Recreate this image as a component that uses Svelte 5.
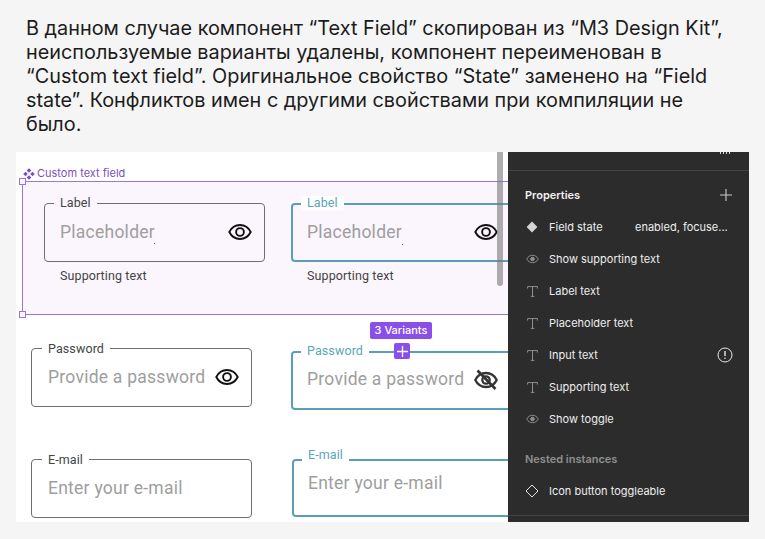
<script>
  const fields = [
    { id: 'a', label: 'Label', ph: 'Placeholder', help: 'Supporting text', eye: 'on', dot: true },
    { id: 'b', label: 'Label', ph: 'Placeholder', help: 'Supporting text', eye: 'on', dot: true, focus: true },
    { id: 'c', label: 'Password', ph: 'Provide a password', eye: 'on' },
    { id: 'd', label: 'Password', ph: 'Provide a password', eye: 'off', focus: true },
    { id: 'e', label: 'E-mail', ph: 'Enter your e-mail' },
    { id: 'f', label: 'E-mail', ph: 'Enter your e-mail', focus: true }
  ];
  const props = [
    { icon: 'diamond', name: 'Field state', value: 'enabled, focuse...' },
    { icon: 'eye', name: 'Show supporting text' },
    { icon: 'text', name: 'Label text' },
    { icon: 'text', name: 'Placeholder text' },
    { icon: 'text', name: 'Input text', warn: true },
    { icon: 'text', name: 'Supporting text' },
    { icon: 'eye', name: 'Show toggle' }
  ];
</script>

<main class="page">
  <p class="intro">В данном случае компонент “Text Field” скопирован из “M3 Design Kit”, неиспользуемые варианты удалены, компонент переименован в “Custom text field”. Оригинальное свойство “State” заменено на “Field state”. Конфликтов имен с другими свойствами при компиляции не было.</p>

  <section class="stage">
    <div class="canvas">
      <div class="selection"></div>
      <span class="handle h1"></span>
      <span class="handle h2"></span>
      <div class="comp-name">
        <svg width="12" height="12" viewBox="0 0 12 12" fill="#7b4fc0"><path d="M6 .2 8.300 2.500 6 4.800 3.700 2.500ZM2.500 3.700 4.800 6 2.500 8.300 .2 6ZM9.500 3.700 11.800 6 9.500 8.300 7.200 6ZM6 7.200 8.300 9.500 6 11.800 3.700 9.500Z"/></svg>
        <span>Custom text field</span>
      </div>

      {#each fields as f}
        <div class="field {f.id}" class:focus={f.focus}>
          <span class="label">{f.label}</span>
          <span class="ph">{f.ph}</span>
          {#if f.dot}<span class="dot"></span>{/if}
          {#if f.eye === 'on'}
            <svg class="eye" width="24" height="24" viewBox="0 0 24 24" fill="none" stroke="#111" stroke-width="1.900"><path d="M1.300 12C3.500 7.600 7.400 5 12 5s8.500 2.600 10.700 7c-2.200 4.400-6.100 7-10.700 7S3.500 16.400 1.300 12Z"/><circle cx="12" cy="12" r="3.900"/></svg>
          {:else if f.eye === 'off'}
            <svg class="eye" width="24" height="24" viewBox="0 0 24 24" fill="none" stroke="#333" stroke-width="2.300"><path d="M1.300 12C3.500 7.600 7.400 5 12 5s8.500 2.600 10.700 7c-2.200 4.400-6.100 7-10.700 7S3.500 16.400 1.300 12Z"/><circle cx="12" cy="12" r="3.700"/><path d="M3.500 2.500 21.500 21" stroke-width="2.600"/></svg>
          {/if}
          {#if f.help}<span class="help">{f.help}</span>{/if}
        </div>
      {/each}

      <div class="scrollbar"></div>
      <div class="variants">3 Variants</div>
      <div class="add">
        <svg width="11" height="11" viewBox="0 0 11 11" stroke="#fff" stroke-width="1.300"><path d="M5.500 0v11M0 5.500h11"/></svg>
      </div>
    </div>

    <aside class="panel">
      <div class="panel-top">
        <svg width="12" height="2" viewBox="0 0 12 2" fill="none" stroke="#ddd"><path d="M1.500 0v2M4.500 0v2M7.500 0v2M10.500 0v2"/></svg>
      </div>
      <div class="panel-body">
        <header class="panel-head">
          <h2>Properties</h2>
          <svg width="12" height="12" viewBox="0 0 12 12" stroke="#c9c9c9" stroke-width="1.100"><path d="M6 0v12M0 6h12"/></svg>
        </header>
        {#each props as p}
          <div class="row">
            <span class="ico">
              {#if p.icon === 'diamond'}
                <svg width="12" height="12" viewBox="0 0 12 12" fill="#d4d4d4"><path d="M6 .6 11.400 6 6 11.400 .6 6Z"/></svg>
              {:else if p.icon === 'eye'}
                <svg width="13" height="10" viewBox="0 0 13 10" fill="none" stroke="#8e8e8e"><path d="M.7 5C2 2.600 4 1.300 6.500 1.300S11 2.600 12.300 5C11 7.400 9 8.700 6.500 8.700S2 7.400 .7 5Z"/><circle cx="6.500" cy="5" r="1.800" fill="#8e8e8e"/></svg>
              {:else}
                <svg width="11" height="11" viewBox="0 0 11 11" fill="none" stroke="#8e8e8e" stroke-width="1"><path d="M.6 2.500V.6h9.800v1.900M5.500 .6v9.800M3.700 10.400h3.600"/></svg>
              {/if}
            </span>
            <span class="name">{p.name}</span>
            {#if p.value}<span class="value">{p.value}</span>{/if}
            {#if p.warn}
              <svg class="warn" width="16" height="16" viewBox="0 0 16 16" fill="none" stroke="#e8e8e8"><circle cx="8" cy="8" r="7"/><path d="M8 4v5" stroke-width="1.400"/><circle cx="8" cy="11.300" r=".8" fill="#e8e8e8" stroke="none"/></svg>
            {/if}
          </div>
        {/each}
        <h3>Nested instances</h3>
        <div class="row">
          <span class="ico">
            <svg width="14" height="14" viewBox="0 0 14 14" fill="none" stroke="#e6e6e6"><path d="M7 1 13 7 7 13 1 7Z"/></svg>
          </span>
          <span class="name">Icon button toggleable</span>
        </div>
      </div>
      <div class="panel-foot"></div>
    </aside>
  </section>
</main>

<style>
  :global(body) { margin: 0; background: #f5f5f5; }
  .page {
    width: 765px;
    height: 539px;
    box-sizing: border-box;
    padding: 16px 16px 17px;
    display: flex;
    flex-direction: column;
    overflow: hidden;
    font-family: Inter, "Noto Sans", sans-serif;
  }
  .intro {
    margin: 0 0 16px;
    padding: 0 10px;
    height: 120px;
    font-size: 19.850px;
    line-height: 24px;
    color: #1c1c1c;
  }
  .stage { display: flex; width: 733px; height: 370px; }
  .canvas {
    position: relative;
    width: 492px;
    height: 370px;
    overflow: hidden;
    background: #fff;
    font-family: Roboto, sans-serif;
  }
  .selection {
    position: absolute;
    left: 6px;
    top: 29px;
    width: 500px;
    height: 132px;
    background: #fbf5fd;
    border: 1px solid #9a75dc;
  }
  .handle {
    position: absolute;
    left: 3px;
    width: 5px;
    height: 5px;
    background: #fbf5fd;
    border: 1px solid #9a75dc;
  }
  .h1 { top: 26px; }
  .h2 { top: 159px; }
  .comp-name {
    position: absolute;
    left: 7px;
    top: 15px;
    display: flex;
    align-items: center;
    gap: 2px;
    font: 11px/13px Inter, sans-serif;
    color: #7b4fc0;
  }
  .field {
    position: absolute;
    box-sizing: border-box;
    height: 59px;
    border: 1px solid #6f6f6f;
    border-radius: 4px;
  }
  .field.focus { border: 2px solid #5a9fb3; }
  .a { left: 28px; top: 51px; width: 221px; }
  .b { left: 275px; top: 51px; width: 260px; }
  .c { left: 15px; top: 196px; width: 221px; }
  .d { left: 275px; top: 199px; width: 260px; }
  .e { left: 15px; top: 307px; width: 221px; }
  .f { left: 276px; top: 307px; width: 260px; height: 58px; }
  .label {
    position: absolute;
    left: 9px;
    top: -8px;
    padding: 0 6px;
    font-size: 12.500px;
    line-height: 14px;
    letter-spacing: .1px;
    color: #444;
    background: #fff;
  }
  .c .label, .e .label { left: 10px; top: -7px; }
  .a .label { background: #fbf5fd; }
  .focus .label { left: 8px; top: -9px; color: #5aa6b6; }
  .f .label { top: -13px; padding-bottom: 4px; }
  .ph {
    position: absolute;
    left: 16px;
    top: 17px;
    font-size: 17.500px;
    line-height: 22px;
    letter-spacing: .25px;
    color: #9e9e9e;
    white-space: nowrap;
  }
  .a .ph { left: 15px; }
  .focus .ph { left: 14px; top: 16px; }
  .d .ph { top: 15px; }
  .f .ph { top: 11px; }
  .dot {
    position: absolute;
    left: 109px;
    top: 39px;
    width: 1px;
    height: 1px;
    background: #777;
  }
  .eye { position: absolute; left: 183px; top: 16px; }
  .b .eye, .d .eye { left: 181px; top: 15px; }
  .help {
    position: absolute;
    left: 15px;
    top: 64px;
    font-size: 12.500px;
    line-height: 15px;
    letter-spacing: .1px;
    color: #444;
    white-space: nowrap;
  }
  .b .help { left: 14px; top: 63px; }
  .scrollbar {
    position: absolute;
    left: 481px;
    top: 0;
    width: 6px;
    height: 134px;
    border-radius: 0 0 3px 3px;
    background: rgba(120, 120, 120, .6);
  }
  .variants {
    position: absolute;
    left: 354px;
    top: 170px;
    width: 62px;
    height: 17px;
    border-radius: 2px;
    background: #8a4fe8;
    color: #fff;
    font: 500 11px/17px Inter, sans-serif;
    text-align: center;
  }
  .add {
    position: absolute;
    left: 378px;
    top: 191px;
    width: 16px;
    height: 16px;
    border-radius: 2px;
    background: #8a4fe8;
    display: flex;
    align-items: center;
    justify-content: center;
  }
  .panel {
    width: 241px;
    height: 370px;
    position: relative;
    display: flex;
    flex-direction: column;
    background: #2c2c2c;
    color: #eee;
    font-size: 11px;
    overflow: hidden;
  }
  .panel-top {
    height: 19px;
    flex: none;
    box-sizing: border-box;
    border-bottom: 1px solid #444;
    display: flex;
    justify-content: flex-end;
    align-items: flex-start;
    padding-right: 18px;
  }
  .panel-body { flex: 1; padding: 0 16px 0 17px; }
  .panel-head {
    height: 48px;
    display: flex;
    align-items: center;
    justify-content: space-between;
    padding-right: 1px;
    margin-bottom: -8px;
  }
  h2 { margin: 0; font-size: 11px; font-weight: 600; color: #f0f0f0; }
  h3 {
    margin: 0 0 -8px;
    height: 48px;
    line-height: 48px;
    font-size: 11px;
    font-weight: 600;
    color: #8f8f8f;
  }
  .row { display: flex; align-items: center; height: 32px; position: relative; }
  .ico { width: 14px; margin-right: 10px; display: flex; justify-content: center; flex: none; }
  .name { white-space: nowrap; }
  .value { position: absolute; left: 110px; white-space: nowrap; }
  .warn { position: absolute; right: 0; }
  .panel-foot { height: 6px; flex: none; border-top: 1px solid #444; }
</style>
